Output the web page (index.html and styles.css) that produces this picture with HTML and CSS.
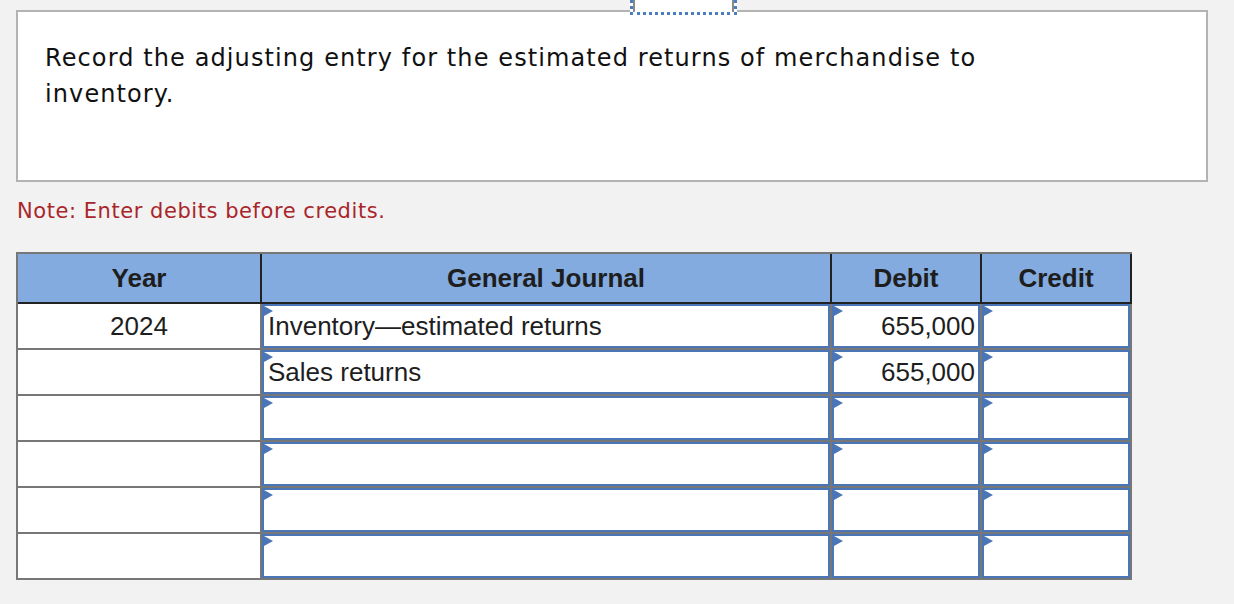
FILE: index.html
```html
<!DOCTYPE html>
<html>
<head>
<meta charset="utf-8">
<link rel="stylesheet" href="styles.css">
</head>
<body>
<div class="page">
  <div class="tab-marker"></div>
  <div class="question">
    <p class="question-text">Record the adjusting entry for the estimated returns of merchandise to inventory.</p>
  </div>
  <p class="note">Note: Enter debits before credits.</p>
  <table class="journal">
    <colgroup>
      <col class="c-year"><col class="c-gj"><col class="c-debit"><col class="c-credit">
    </colgroup>
    <thead>
      <tr><th class="first">Year</th><th>General Journal</th><th>Debit</th><th>Credit</th></tr>
    </thead>
    <tbody>
      <tr><td class="year">2024</td><td><div class="field">Inventory—estimated returns</div></td><td><div class="field num">655,000</div></td><td><div class="field num"></div></td></tr>
      <tr><td class="year"></td><td><div class="field">Sales returns</div></td><td><div class="field num">655,000</div></td><td><div class="field num"></div></td></tr>
      <tr><td class="year"></td><td><div class="field"></div></td><td><div class="field num"></div></td><td><div class="field num"></div></td></tr>
      <tr><td class="year"></td><td><div class="field"></div></td><td><div class="field num"></div></td><td><div class="field num"></div></td></tr>
      <tr><td class="year"></td><td><div class="field"></div></td><td><div class="field num"></div></td><td><div class="field num"></div></td></tr>
      <tr><td class="year"></td><td><div class="field"></div></td><td><div class="field num"></div></td><td><div class="field num"></div></td></tr>
    </tbody>
  </table>
</div>
</body>
</html>
```
FILE: styles.css
```css
html, body {
  margin: 0;
  padding: 0;
  background: #f2f2f2;
}
.page {
  position: relative;
  padding: 10px 0 0 16px;
}
.tab-marker {
  position: absolute;
  left: 630px;
  top: 0;
  width: 101px;
  height: 12px;
  border: 3px dotted #4a7ebf;
  border-top: none;
  background: #fff;
  box-shadow: inset 2px 0 0 #8a8a8a, inset -2px 0 0 #8a8a8a;
  z-index: 2;
}
.question {
  width: 1188px;
  height: 168px;
  border: 2px solid #b3b3b3;
  background: #fff;
  box-sizing: content-box;
}
.question-text {
  margin: 0;
  padding: 28px 0 0 27px;
  width: 1000px;
  font-family: "DejaVu Sans", Verdana, sans-serif;
  font-size: 24px;
  letter-spacing: 1.1px;
  line-height: 36px;
  color: #111;
}
.note {
  margin: 16px 0 0 1px;
  font-family: "DejaVu Sans", Verdana, sans-serif;
  font-size: 21px;
  letter-spacing: 0.55px;
  line-height: 26px;
  color: #a8262a;
}
.journal {
  margin-top: 28px;
  border-collapse: separate;
  border-spacing: 0;
  border-top: 2px solid #777;
  border-left: 2px solid #777;
  table-layout: fixed;
  width: 1116px;
  font-family: "Liberation Sans", Arial, sans-serif;
  font-size: 26px;
  color: #1e1e1e;
}
.c-year { width: 244px; }
.c-gj { width: 570px; }
.c-debit { width: 150px; }
.c-credit { width: 150px; }
.journal th {
  background: #83abdf;
  height: 48px;
  padding: 0;
  font-weight: bold;
  text-align: center;
  border-right: 2px solid #222;
  border-bottom: 2px solid #222;
  color: #1e1e1e;
}
.journal td {
  height: 44px;
  padding: 0;
  background: #fff;
  border-right: 2px solid #777;
  border-bottom: 2px solid #777;
  vertical-align: top;
}
.journal td.year {
  text-align: center;
  vertical-align: middle;
}
.field {
  position: relative;
  box-sizing: border-box;
  height: 44px;
  border: 2px solid #4a76b8;
  padding: 0 3px 0 4px;
  line-height: 40px;
  white-space: nowrap;
  overflow: hidden;
}
.field::before {
  content: "";
  position: absolute;
  left: 0;
  top: 0;
  border-left: 9px solid #4a76b8;
  border-top: 5px solid transparent;
  border-bottom: 5px solid transparent;
}
.field.num {
  text-align: right;
}
```
